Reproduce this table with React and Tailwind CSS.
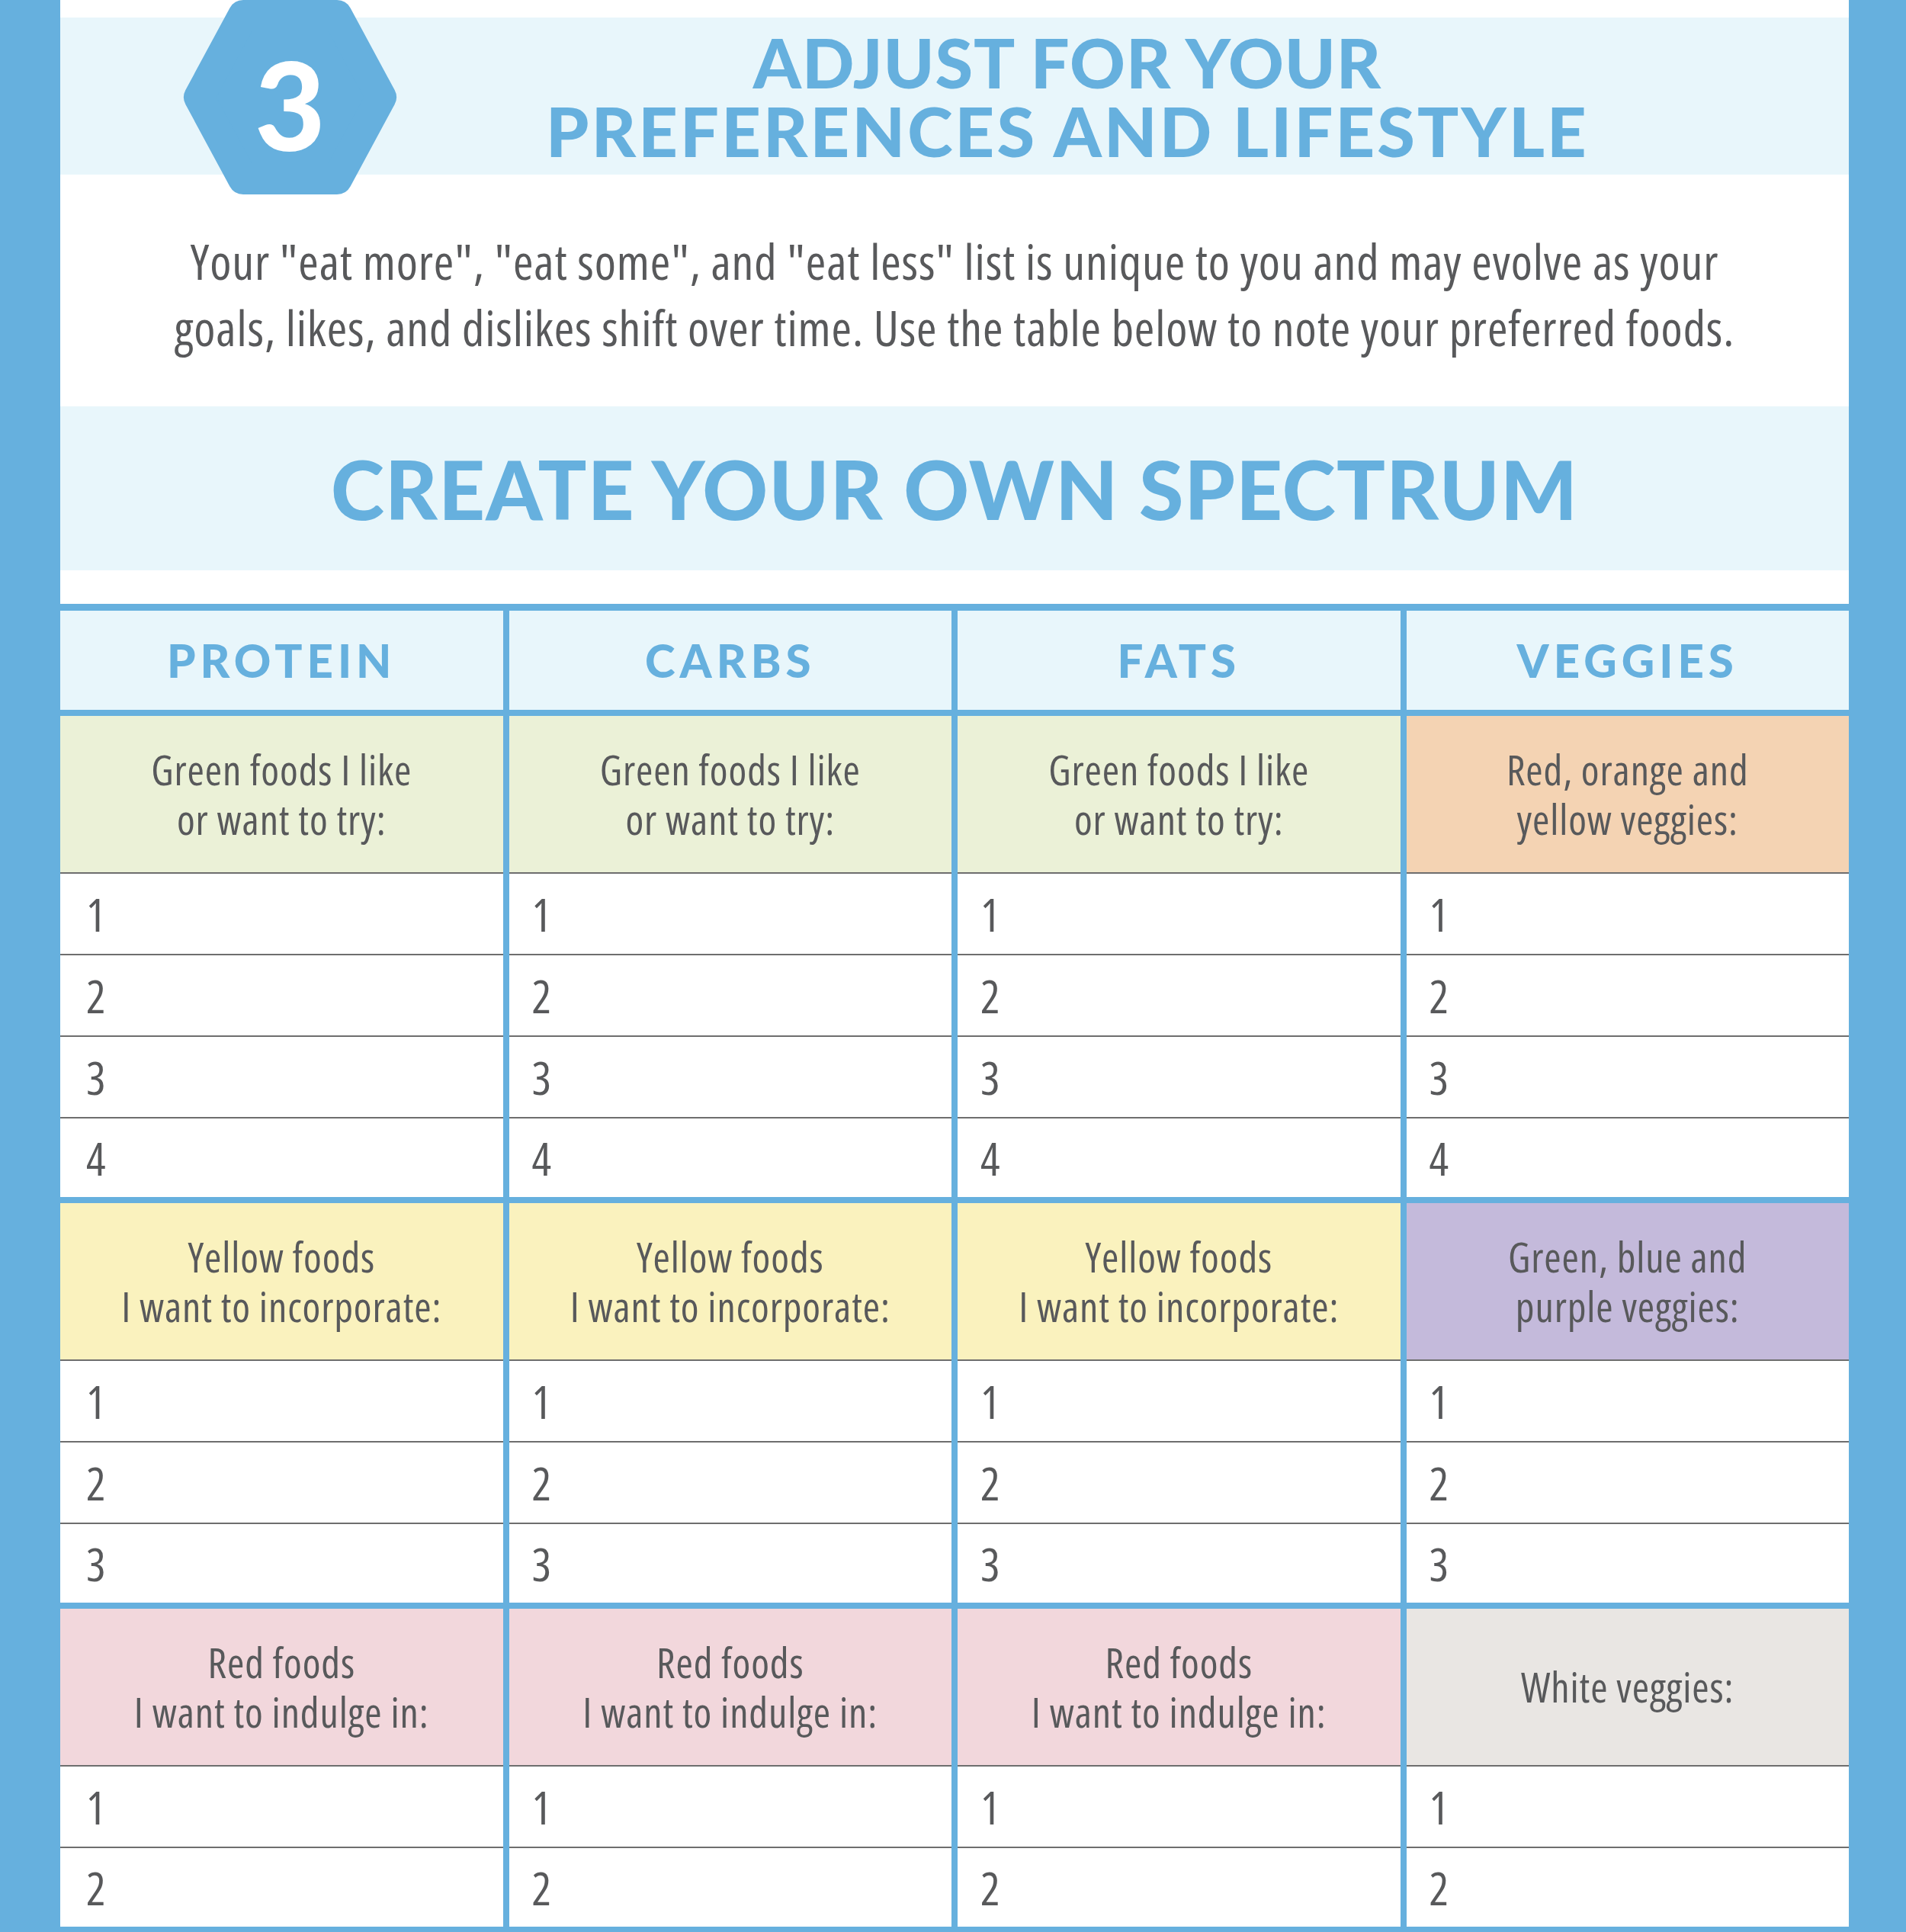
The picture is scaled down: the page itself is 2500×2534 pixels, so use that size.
import React from 'react';

const BODY = "font-['Open_Sans','Roboto_Condensed',sans-serif] [font-stretch:75%] font-normal tracking-[0.055em]";

const sections = [
  {
    rows: 4,
    cells: [
      { bg: 'bg-[#ebf1d7]', lines: ['Green foods I like', 'or want to try:'] },
      { bg: 'bg-[#ebf1d7]', lines: ['Green foods I like', 'or want to try:'] },
      { bg: 'bg-[#ebf1d7]', lines: ['Green foods I like', 'or want to try:'] },
      { bg: 'bg-[#f4d3b3]', lines: ['Red, orange and', 'yellow veggies:'] },
    ],
  },
  {
    rows: 3,
    cells: [
      { bg: 'bg-[#faf2be]', lines: ['Yellow foods', 'I want to incorporate:'] },
      { bg: 'bg-[#faf2be]', lines: ['Yellow foods', 'I want to incorporate:'] },
      { bg: 'bg-[#faf2be]', lines: ['Yellow foods', 'I want to incorporate:'] },
      { bg: 'bg-[#c4badb]', lines: ['Green, blue and', 'purple veggies:'] },
    ],
  },
  {
    rows: 2,
    cells: [
      { bg: 'bg-[#f2d7dc]', lines: ['Red foods', 'I want to indulge in:'] },
      { bg: 'bg-[#f2d7dc]', lines: ['Red foods', 'I want to indulge in:'] },
      { bg: 'bg-[#f2d7dc]', lines: ['Red foods', 'I want to indulge in:'] },
      { bg: 'bg-[#e9e6e3]', lines: ['White veggies:'] },
    ],
  },
];

function Hexagon() {
  return (
    <svg width="283" height="255" viewBox="0 0 283 255" className="absolute left-[160px] top-0">
      <polygon
        points="80,20 203,20 261,127.5 203,235 80,235 22,127.5"
        fill="#66b0de"
        stroke="#66b0de"
        strokeWidth="40"
        strokeLinejoin="round"
      />
    </svg>
  );
}

function Section({ section }) {
  const nums = Array.from({ length: section.rows }, (_, i) => i + 1);
  return (
    <div className="grid grid-cols-4 gap-x-2">
      {section.cells.map((cell, c) => (
        <div key={c} className="flex flex-col">
          <div className={`h-[207px] border-b-2 border-[#6e6e6e] flex flex-col items-center justify-center ${cell.bg} text-[54px] leading-[65px] text-[#58595b]`}>
            {cell.lines.map((l) => (
              <div key={l} className="h-[65px] whitespace-nowrap">{l}</div>
            ))}
          </div>
          {nums.map((n) => {
            const last = n === section.rows;
            return (
              <div
                key={n}
                className={`${last ? 'h-[103px]' : 'h-[107px] border-b-2 border-[#6e6e6e]'} ${c === 0 ? 'pl-[34px]' : 'pl-[30px]'} bg-white flex items-center text-[60px] text-[#58595b]`}
              >
                {n}
              </div>
            );
          })}
        </div>
      ))}
    </div>
  );
}

export default function App() {
  return (
    <div className={`min-h-screen bg-[#66b0de] pl-[79px] pr-[75px] ${BODY}`}>
      <div className="bg-white">
        <div className="relative pt-[23px]">
          <div className="h-[206px] bg-[#e8f6fb] flex flex-col items-center justify-center pl-[296px] font-['Lato',sans-serif] [font-stretch:100%] font-black text-[90px] leading-[90px] text-[#66b0de]">
            <div className="h-[90px] tracking-[0.01em]">ADJUST FOR YOUR</div>
            <div className="h-[90px] tracking-[0.035em]">PREFERENCES AND LIFESTYLE</div>
          </div>
          <Hexagon />
          <div className="absolute left-[160px] top-0 w-[283px] h-[255px] flex items-center justify-center pt-[16px] font-['Lato',sans-serif] [font-stretch:100%] font-black text-[160px] leading-none tracking-normal text-white">
            3
          </div>
        </div>

        <div className="h-[304px] flex flex-col items-center justify-center pt-[10px] text-[64px] leading-[87px] text-[#58595b] text-center">
          <div className="h-[87px] whitespace-nowrap">Your "eat more", "eat some", and "eat less" list is unique to you and may evolve as your</div>
          <div className="h-[87px] whitespace-nowrap">goals, likes, and dislikes shift over time. Use the table below to note your preferred foods.</div>
        </div>

        <div className="h-[215px] bg-[#e8f6fb] flex items-center justify-center">
          <h2 className="font-['Lato',sans-serif] [font-stretch:100%] font-black text-[106px] leading-none tracking-[0.012em] text-[#66b0de]">
            CREATE YOUR OWN SPECTRUM
          </h2>
        </div>

        <div className="h-[44px]" />

        <div className="bg-[#66b0de] flex flex-col gap-y-2 pt-[9px] pb-2">
          <div className="grid grid-cols-4 gap-x-2">
            {['PROTEIN', 'CARBS', 'FATS', 'VEGGIES'].map((h) => (
              <div
                key={h}
                className="h-[130px] bg-[#e8f6fb] flex items-center justify-center font-['Lato',sans-serif] [font-stretch:100%] font-black text-[60px] tracking-[0.1em] text-[#66b0de]"
              >
                {h}
              </div>
            ))}
          </div>
          {sections.map((s, i) => (
            <Section key={i} section={s} />
          ))}
        </div>
      </div>
    </div>
  );
}
